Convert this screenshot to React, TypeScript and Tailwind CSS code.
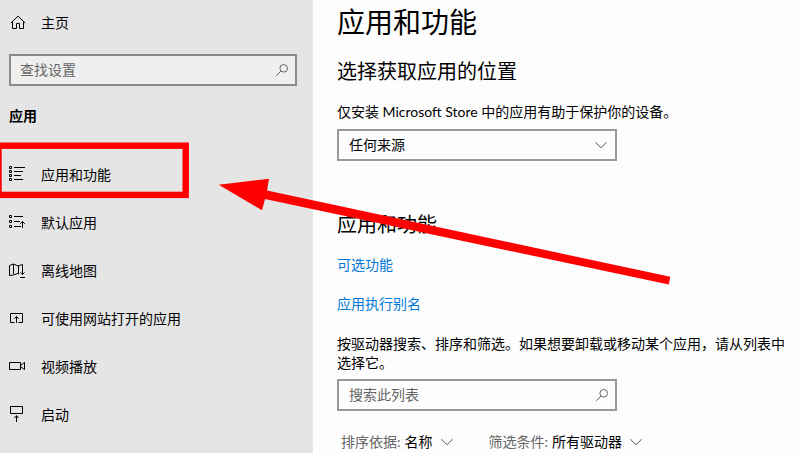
import type { ReactNode } from "react";

interface NavItem {
  label: string;
  icon: ReactNode;
}

const Icon = ({ children }: { children: ReactNode }) => (
  <svg
    className="w-4 h-4 shrink-0 overflow-visible"
    viewBox="0 0 16 16"
    fill="none"
    stroke="#000"
    strokeWidth="1"
    aria-hidden="true"
  >
    {children}
  </svg>
);

const HomeIcon = () => (
  <Icon>
    <path d="M1.8 8L9 1.2L16.2 8M3.5 6.5V13.5H7.5V8.5H10.5V13.5H14.5V6.5" />
  </Icon>
);

const AppsIcon = () => (
  <Icon>
    <path d="M.5 .5h2v2h-2zM.5 4.5h2v2h-2zM.5 8.5h2v2h-2zM.5 12.5h2v2h-2z" />
    <path d="M5 1.5H16M5 5.5H14M5 9.5H12M5 13.5H14" />
  </Icon>
);

const DefaultsIcon = () => (
  <Icon>
    <path d="M.5 1.5h2v2h-2zM.5 6.5h2v2h-2zM.5 11.5h2v2h-2z" />
    <path d="M5 2.5H14M5 7.5H11M5 12.5H12M13.5 14V7.5M11.2 9.8L13.5 7.5L15.8 9.8" />
  </Icon>
);

const MapsIcon = () => (
  <Icon>
    <path d="M10 12L8.5 11.5L4.5 13L.5 13.5V3.5L4.5 2L9 4L13.5 2.5V12.5M4.5 2V12M9.5 4V12" />
    <path d="M11.5 10.5L13.5 12.5L15.5 10.5M11 15.5H16" />
  </Icon>
);

const WebsitesIcon = () => (
  <Icon>
    <path d="M5.5 12.5H1.5V3.5H13.5V12.5H9.5M7.5 13V6.5M5.3 8.7L7.5 6.5L9.7 8.7" />
  </Icon>
);

const VideoIcon = () => (
  <Icon>
    <path d="M.5 4.5H11.5V11.5H.5zM12 7L15.5 4.5V11.5L12 9" />
  </Icon>
);

const StartupIcon = () => (
  <Icon>
    <path d="M1.5 .5H13.5V7.5H1.5zM7.5 16V9.7M5.3 12L7.5 9.7L9.7 12" />
  </Icon>
);

const SearchIcon = () => (
  <svg
    className="w-3 h-3 shrink-0"
    viewBox="0 0 12 12"
    fill="none"
    stroke="#666"
    aria-hidden="true"
  >
    <circle cx="7.7" cy="4.3" r="3.8" />
    <path d="M5 7L.2 11.8" />
  </svg>
);

const ChevronIcon = () => (
  <svg
    className="w-3 h-3 shrink-0 pointer-events-none"
    viewBox="0 0 12 12"
    fill="none"
    stroke="#555"
    aria-hidden="true"
  >
    <path d="M.4 3.2L6 8.8L11.6 3.2" />
  </svg>
);

const navItems: NavItem[] = [
  { label: "应用和功能", icon: <AppsIcon /> },
  { label: "默认应用", icon: <DefaultsIcon /> },
  { label: "离线地图", icon: <MapsIcon /> },
  { label: "可使用网站打开的应用", icon: <WebsitesIcon /> },
  { label: "视频播放", icon: <VideoIcon /> },
  { label: "启动", icon: <StartupIcon /> },
];

const Sidebar = () => (
  <aside className="w-[313px] shrink-0 bg-[#e5e5e5]">
    <a href="#home" className="flex items-center gap-4 h-[46px] px-[9px]">
      <HomeIcon />
      主页
    </a>
    <label className="mt-2 ml-[9px] mr-4 h-8 pl-[9px] pr-[7px] flex items-center border-2 border-[#8a8a8a] bg-[#efefef]">
      <input
        type="text"
        aria-label="查找设置"
        placeholder="查找设置"
        className="flex-1 min-w-0 bg-transparent outline-none placeholder:text-[#666]"
      />
      <SearchIcon />
    </label>
    <h2 className="mt-5 px-[9px] font-bold">应用</h2>
    <nav className="mt-6">
      {navItems.map((item) => (
        <a
          key={item.label}
          href="#nav"
          className="flex items-center gap-4 h-12 px-[9px]"
        >
          {item.icon}
          <span className="pt-[2px]">{item.label}</span>
        </a>
      ))}
    </nav>
  </aside>
);

interface FilterProps {
  id: string;
  label: string;
  value: string;
}

const Filter = ({ id, label, value }: FilterProps) => (
  <div className="flex items-center">
    <label htmlFor={id} className="text-[#666]">
      {label}
    </label>
    <div className="ml-1 flex items-center">
      <select id={id} className="appearance-none bg-transparent -mr-3 pr-5">
        <option>{value}</option>
      </select>
      <ChevronIcon />
    </div>
  </div>
);

// Red frame and arrow pointing at the "应用和功能" entry
const Annotation = () => (
  <svg
    className="absolute top-0 left-0 w-full h-full pointer-events-none"
    aria-hidden="true"
  >
    <rect
      x="-1.5"
      y="145.7"
      width="187.2"
      height="49.2"
      fill="none"
      stroke="#f00"
      strokeWidth="6.4"
    />
    <polygon
      points="218.7,184.8 269,178.8 267,190.6 670.3,276.8 668.8,284.5 265,199 262,210.3"
      fill="#f00"
    />
  </svg>
);

const App = () => {
  return (
    <div className="relative flex min-h-screen bg-[#fdfdfd] text-black text-sm leading-5 font-['Lato','Noto_Sans_CJK_SC',sans-serif]">
      <Sidebar />
      <main className="flex-1 min-w-0 pl-6 pr-4">
        <h1 className="text-[28px] leading-11">应用和功能</h1>

        <section>
          <h2 className="mt-[13px] text-xl leading-7">选择获取应用的位置</h2>
          <p className="mt-[17px]">
            仅安装 Microsoft Store 中的应用有助于保护你的设备。
          </p>
          <div className="mt-[7px] w-[280px] h-8 flex items-center border-2 border-[#999] pr-2">
            <select
              aria-label="选择获取应用的位置"
              className="appearance-none flex-1 h-full -mr-3 pl-[10px] bg-transparent"
            >
              <option>任何来源</option>
            </select>
            <ChevronIcon />
          </div>
        </section>

        <section>
          <h2 className="mt-[49px] text-xl leading-7">应用和功能</h2>
          <a href="#optional" className="mt-[17px] block w-fit text-[#0078d7]">
            可选功能
          </a>
          <a href="#alias" className="mt-[19px] block w-fit text-[#0078d7]">
            应用执行别名
          </a>
          <p className="mt-5 leading-[19px]">
            按驱动器搜索、排序和筛选。如果想要卸载或移动某个应用，请从列表中选择它。
          </p>
          <label className="mt-[7px] w-[280px] h-8 pl-[10px] pr-[7px] flex items-center border-2 border-[#999]">
            <input
              type="text"
              aria-label="搜索此列表"
              placeholder="搜索此列表"
              className="flex-1 min-w-0 bg-transparent outline-none placeholder:text-[#666]"
            />
            <SearchIcon />
          </label>
          <div className="mt-[21px] pl-1 flex gap-9">
            <Filter id="sort" label="排序依据:" value="名称" />
            <Filter id="filter" label="筛选条件:" value="所有驱动器" />
          </div>
        </section>
      </main>
      <Annotation />
    </div>
  );
};

export default App;
